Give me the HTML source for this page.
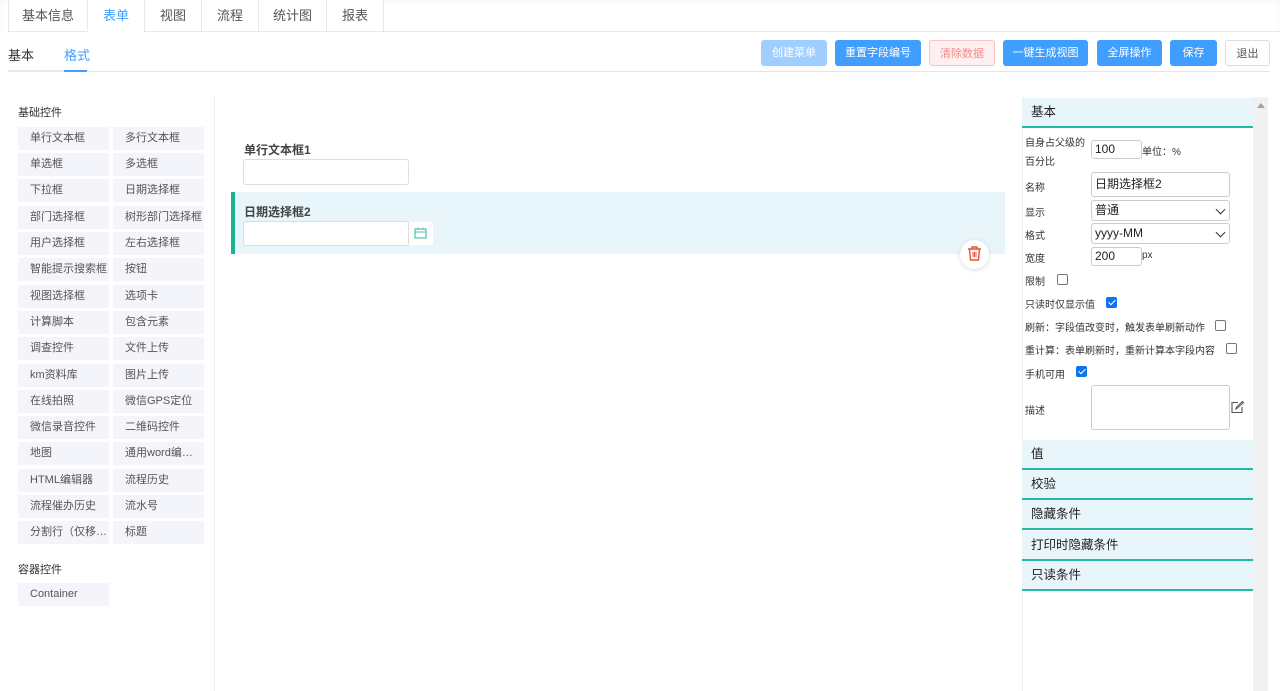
<!DOCTYPE html>
<html><head><meta charset="utf-8"><style>
*{box-sizing:border-box;margin:0;padding:0}
body{width:1280px;height:691px;overflow:hidden;background:#fff;font-family:"Liberation Sans","Noto Sans CJK SC",sans-serif;color:#333;position:relative;font-size:12px}
.a{position:absolute}
.tabs{top:0;left:0;width:1280px;height:33px;box-shadow:0 2px 4px rgba(0,0,0,.04) inset}
.tab{position:absolute;top:0;height:32px;border:1px solid #e8e8e8;border-top:none;line-height:31px;text-align:center;font-size:13px;color:#555;background:#fff}
.btn{position:absolute;top:40px;height:26px;border-radius:3px;line-height:26px;text-align:center;font-size:11px;color:#fff;background:#409eff}
.pi{position:absolute;width:91px;height:23px;background:#f4f5fa;line-height:22px;padding-left:12px;padding-right:2px;font-size:11px;color:#555;white-space:nowrap;overflow:hidden;text-overflow:ellipsis}
.lbl{position:absolute;left:1025px;font-size:10px;color:#333}
.inp{position:absolute;border:1px solid #ccc;border-radius:3px;background:#fff;font-size:12px;line-height:20px;padding-left:3px;color:#222}
.hd{position:absolute;left:1022px;width:231px;height:30px;background:#e8f5fa;border-bottom:2px solid #26b7a6;line-height:29px;padding-left:9px;font-size:12.5px;color:#222}
.cb{position:absolute;width:11px;height:11px;border:1px solid #777;border-radius:2px;background:#fff}
.cbc{position:absolute;width:11px;height:11px;border-radius:2px;background:#0b74ee}
.cbc:after{content:"";position:absolute;left:3.5px;top:1px;width:3px;height:6px;border:solid #fff;border-width:0 1.6px 1.6px 0;transform:rotate(45deg)}
.chev{position:absolute;right:5px;top:5px;width:7px;height:7px;border:solid #333;border-width:0 1.5px 1.5px 0;transform:rotate(45deg)}
</style></head><body>
<div class="a tabs"></div>
<div class="tab" style="left:8px;width:80px">基本信息</div>
<div class="tab" style="left:87px;width:58px;color:#409eff;border-bottom-color:#fff">表单</div>
<div class="tab" style="left:144px;width:58px">视图</div>
<div class="tab" style="left:201px;width:58px">流程</div>
<div class="tab" style="left:258px;width:69px">统计图</div>
<div class="tab" style="left:326px;width:58px">报表</div>
<div class="a" style="left:383px;top:0;width:897px;height:32px;border-bottom:1px solid #e8e8e8"></div>

<div class="a" style="left:8px;top:45px;font-size:13px;color:#333">基本</div>
<div class="a" style="left:64px;top:45px;font-size:13px;color:#409eff">格式</div>
<div class="a" style="left:8px;top:71px;width:1262px;height:1px;background:#e6e6e6"></div>
<div class="a" style="left:8px;top:70px;width:56px;height:2px;background:#e4e7ed"></div>
<div class="a" style="left:64px;top:70px;width:23px;height:2px;background:#409eff"></div>

<div class="btn" style="left:761px;width:66px;background:#a0cfff">创建菜单</div>
<div class="btn" style="left:835px;width:86px">重置字段编号</div>
<div class="btn" style="left:929px;width:66px;background:#fef0f0;color:#f78989;border:1px solid #fbc4c4">清除数据</div>
<div class="btn" style="left:1003px;width:85px">一键生成视图</div>
<div class="btn" style="left:1097px;width:65px">全屏操作</div>
<div class="btn" style="left:1170px;width:47px">保存</div>
<div class="btn" style="left:1225px;width:45px;background:#fff;color:#555;border:1px solid #ddd">退出</div>

<div class="a" style="left:18px;top:104px;font-size:11px;color:#333">基础控件</div>
<div class="pi" style="left:18px;top:127px">单行文本框</div><div class="pi" style="left:113px;top:127px">多行文本框</div>
<div class="pi" style="left:18px;top:153px">单选框</div><div class="pi" style="left:113px;top:153px">多选框</div>
<div class="pi" style="left:18px;top:179px">下拉框</div><div class="pi" style="left:113px;top:179px">日期选择框</div>
<div class="pi" style="left:18px;top:206px">部门选择框</div><div class="pi" style="left:113px;top:206px">树形部门选择框</div>
<div class="pi" style="left:18px;top:232px">用户选择框</div><div class="pi" style="left:113px;top:232px">左右选择框</div>
<div class="pi" style="left:18px;top:258px">智能提示搜索框</div><div class="pi" style="left:113px;top:258px">按钮</div>
<div class="pi" style="left:18px;top:285px">视图选择框</div><div class="pi" style="left:113px;top:285px">选项卡</div>
<div class="pi" style="left:18px;top:311px">计算脚本</div><div class="pi" style="left:113px;top:311px">包含元素</div>
<div class="pi" style="left:18px;top:337px">调查控件</div><div class="pi" style="left:113px;top:337px">文件上传</div>
<div class="pi" style="left:18px;top:364px">km资料库</div><div class="pi" style="left:113px;top:364px">图片上传</div>
<div class="pi" style="left:18px;top:390px">在线拍照</div><div class="pi" style="left:113px;top:390px">微信GPS定位</div>
<div class="pi" style="left:18px;top:416px">微信录音控件</div><div class="pi" style="left:113px;top:416px">二维码控件</div>
<div class="pi" style="left:18px;top:442px">地图</div><div class="pi" style="left:113px;top:442px">通用word编辑器</div>
<div class="pi" style="left:18px;top:469px">HTML编辑器</div><div class="pi" style="left:113px;top:469px">流程历史</div>
<div class="pi" style="left:18px;top:495px">流程催办历史</div><div class="pi" style="left:113px;top:495px">流水号</div>
<div class="pi" style="left:18px;top:521px">分割行（仅移动端）</div><div class="pi" style="left:113px;top:521px">标题</div>
<div class="a" style="left:18px;top:561px;font-size:11px;color:#333">容器控件</div>
<div class="pi" style="left:18px;top:583px">Container</div>

<div class="a" style="left:214px;top:97px;width:1px;height:594px;background:#eee"></div>

<div class="a" style="left:244px;top:141px;font-size:12px;font-weight:bold;color:#444">单行文本框1</div>
<div class="inp" style="left:243px;top:159px;width:166px;height:26px;border-color:#ddd"></div>
<div class="a" style="left:231px;top:192px;width:774px;height:62px;background:#e8f5fa;border-left:4px solid #1ab394"></div>
<div class="a" style="left:244px;top:203px;font-size:12px;font-weight:bold;color:#444">日期选择框2</div>
<div class="inp" style="left:243px;top:221px;width:166px;height:25px;border-color:#ddd"></div>
<div class="a" style="left:409px;top:222px;width:24px;height:23px;background:#fff"></div>
<svg class="a" style="left:414px;top:227px" width="13" height="12" viewBox="0 0 13 12"><rect x="1" y="2" width="11" height="9" fill="none" stroke="#4cc3b5" stroke-width="1.2"/><line x1="1" y1="5" x2="12" y2="5" stroke="#4cc3b5"/><line x1="4" y1="0.5" x2="4" y2="3" stroke="#4cc3b5"/><line x1="9" y1="0.5" x2="9" y2="3" stroke="#4cc3b5"/></svg>
<div class="a" style="left:960px;top:240px;width:29px;height:29px;border-radius:50%;background:#fff;box-shadow:0 1px 5px rgba(0,0,0,.15)"></div>
<svg class="a" style="left:966px;top:245px" width="17" height="17" viewBox="0 0 17 17" fill="none" stroke="#e8503a" stroke-width="1.4"><path d="M2 4h13M6 4V2h5v2M3.5 4l1 11h8l1-11"/><path d="M7 7v5M8.5 7v5M10 7v5" stroke-width="1"/></svg>

<div class="a" style="left:1022px;top:97px;width:246px;height:594px;border-left:1px solid #eee"></div>
<div class="a" style="left:1253px;top:97px;width:15px;height:594px;background:#f1f1f1"></div>
<div class="a" style="left:1257px;top:103px;width:0;height:0;border-left:4px solid transparent;border-right:4px solid transparent;border-bottom:5px solid #a3a3a3"></div>
<div class="hd" style="top:98px">基本</div>
<div class="lbl" style="top:134px">自身占父级的</div>
<div class="lbl" style="top:153px">百分比</div>
<div class="inp" style="left:1091px;top:140px;width:51px;height:19px;line-height:17px">100</div>
<div class="lbl" style="left:1142px;top:143px">单位：%</div>
<div class="lbl" style="top:179px">名称</div>
<div class="inp" style="left:1091px;top:172px;width:139px;height:25px;line-height:23px">日期选择框2</div>
<div class="lbl" style="top:204px">显示</div>
<div class="inp" style="left:1091px;top:200px;width:139px;height:21px;line-height:19px">普通<i class="chev"></i></div>
<div class="lbl" style="top:227px">格式</div>
<div class="inp" style="left:1091px;top:223px;width:139px;height:21px;line-height:19px">yyyy-MM<i class="chev"></i></div>
<div class="lbl" style="top:250px">宽度</div>
<div class="inp" style="left:1091px;top:247px;width:51px;height:19px;line-height:17px">200</div>
<div class="lbl" style="left:1142px;top:250px">px</div>
<div class="lbl" style="top:273px">限制</div><div class="cb" style="left:1057px;top:274px"></div>
<div class="lbl" style="top:296px">只读时仅显示值</div><div class="cbc" style="left:1106px;top:297px"></div>
<div class="lbl" style="top:319px">刷新：字段值改变时，触发表单刷新动作</div><div class="cb" style="left:1215px;top:320px"></div>
<div class="lbl" style="top:342px">重计算：表单刷新时，重新计算本字段内容</div><div class="cb" style="left:1226px;top:343px"></div>
<div class="lbl" style="top:366px">手机可用</div><div class="cbc" style="left:1076px;top:366px"></div>
<div class="lbl" style="top:402px">描述</div>
<div class="inp" style="left:1091px;top:385px;width:139px;height:45px"></div>
<svg class="a" style="left:1231px;top:401px" width="13" height="12" viewBox="0 0 13 12" fill="none" stroke="#555" stroke-width="1.1"><path d="M7 1.5H1v10h10V6"/><path d="M5 8l.5-2 6-5.5 1 1-6 5.5z"/></svg>
<div class="hd" style="top:440px">值</div>
<div class="hd" style="top:470px">校验</div>
<div class="hd" style="top:500px">隐藏条件</div>
<div class="hd" style="top:531px">打印时隐藏条件</div>
<div class="hd" style="top:561px">只读条件</div>
</body></html>
